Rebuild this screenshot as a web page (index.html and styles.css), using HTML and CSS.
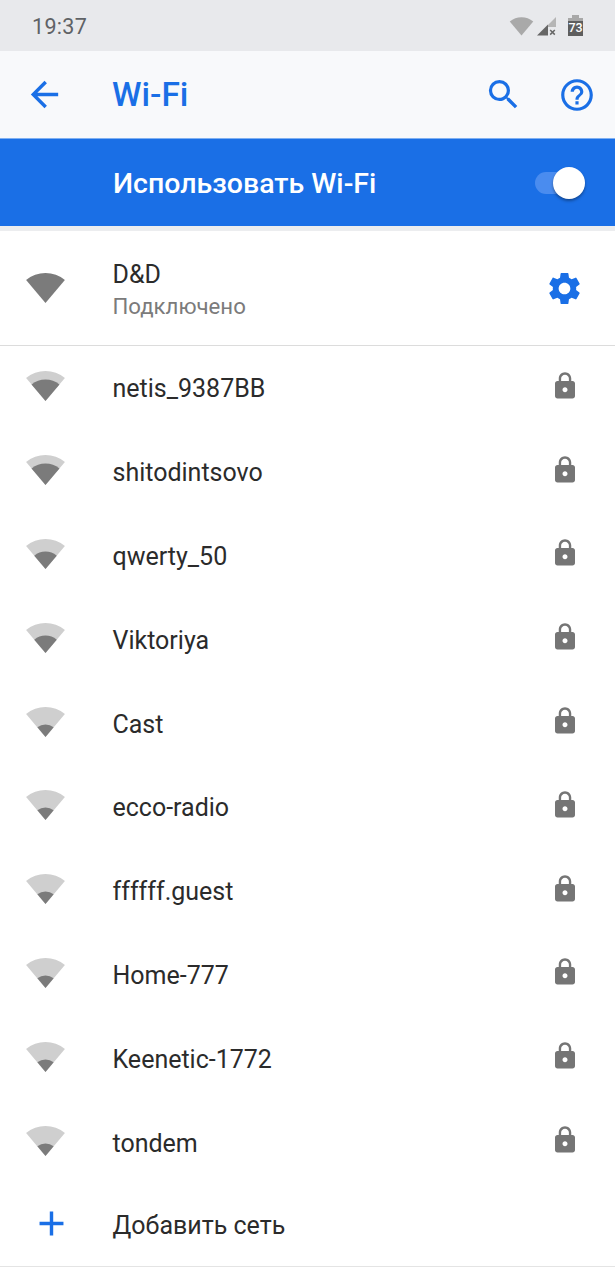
FILE: index.html
```html
<!DOCTYPE html>
<html lang="ru">
<head>
  <meta charset="UTF-8">
  <title>Wi-Fi</title>
  <link rel="stylesheet" href="styles.css">
</head>
<body>

<svg class="defs" width="0" height="0">
  <defs>
    <path id="wedge" d="M20 32 L0.6 9 A30.5 30.5 0 0 1 39.4 9 Z"/>
    <symbol id="wifi-4" viewBox="0 0 40 33">
      <use href="#wedge" fill="#7b7b7b"/>
    </symbol>
    <symbol id="wifi-3" viewBox="0 0 40 33">
      <use href="#wedge" fill="#cfcfcf"/>
      <use href="#wedge" fill="#7b7b7b" transform="translate(20 32) scale(.72) translate(-20 -32)"/>
    </symbol>
    <symbol id="wifi-2" viewBox="0 0 40 33">
      <use href="#wedge" fill="#cfcfcf"/>
      <use href="#wedge" fill="#7b7b7b" transform="translate(20 32) scale(.58) translate(-20 -32)"/>
    </symbol>
    <symbol id="wifi-1" viewBox="0 0 40 33">
      <use href="#wedge" fill="#cfcfcf"/>
      <use href="#wedge" fill="#7b7b7b" transform="translate(20 32) scale(.42) translate(-20 -32)"/>
    </symbol>
    <symbol id="lock" viewBox="0 0 24 24">
      <path d="M18 8h-1V6c0-2.76-2.24-5-5-5S7 3.24 7 6v2H6c-1.1 0-2 .9-2 2v10c0 1.1.9 2 2 2h12c1.1 0 2-.9 2-2V10c0-1.1-.9-2-2-2zm-6 9c-1.1 0-2-.9-2-2s.9-2 2-2 2 .9 2 2-.9 2-2 2zm3.1-9H8.9V6c0-1.71 1.39-3.1 3.1-3.1 1.71 0 3.1 1.39 3.1 3.1v2z"/>
    </symbol>
  </defs>
</svg>

<div class="status-bar">
  <span class="clock">19:37</span>
  <div class="status-icons">
    <svg class="st-wifi" viewBox="0 0 40 33"><use href="#wedge" fill="#a9a9a9"/></svg>
    <svg class="st-signal" viewBox="0 0 20 19">
      <path d="M11 8 L19 0 V10 H11 Z" fill="#b5b5b5"/>
      <path d="M0 18.5 L11 7.5 V18.5 Z" fill="#666"/>
      <path d="M13.2 13 L17.8 17.6 M17.8 13 L13.2 17.6" stroke="#666" stroke-width="1.5" fill="none"/>
    </svg>
    <div class="st-battery"><span>73</span></div>
  </div>
</div>

<header class="toolbar">
  <svg class="ic ic-back" viewBox="0 0 24 24"><path d="M20 11H7.83l5.59-5.59L12 4l-8 8 8 8 1.41-1.41L7.83 13H20v-2z"/></svg>
  <h1>Wi-Fi</h1>
  <svg class="ic ic-search" viewBox="0 0 24 24"><path d="M15.5 14h-.79l-.28-.27A6.471 6.471 0 0 0 16 9.5 6.5 6.5 0 1 0 9.5 16c1.61 0 3.09-.59 4.23-1.57l.27.28v.79l5 4.99L20.49 19l-4.99-5zm-6 0C7.01 14 5 11.99 5 9.5S7.01 5 9.5 5 14 7.01 14 9.5 11.99 14 9.5 14z"/></svg>
  <svg class="ic ic-help" viewBox="0 0 24 24"><path d="M11 18h2v-2h-2v2zm1-16C6.48 2 2 6.48 2 12s4.48 10 10 10 10-4.48 10-10S17.52 2 12 2zm0 18c-4.41 0-8-3.59-8-8s3.59-8 8-8 8 3.59 8 8-3.59 8-8 8zm0-14c-2.21 0-4 1.79-4 4h2c0-1.1.9-2 2-2s2 .9 2 2c0 2-3 1.75-3 5h2c0-2.25 3-2.5 3-5 0-2.21-1.79-4-4-4z"/></svg>
</header>

<div class="master-switch">
  <span class="master-label">Использовать Wi-Fi</span>
  <div class="switch"><div class="thumb"></div></div>
</div>

<main class="list">

  <!-- Connected network -->
  <div class="row row-connected">
    <svg class="wifi"><use href="#wifi-4"/></svg>
    <div class="row-text">
      <div class="name">D&amp;D</div>
      <div class="sub">Подключено</div>
    </div>
    <svg class="ic ic-gear" viewBox="0 0 24 24"><path d="M19.14 12.94c.04-.3.06-.61.06-.94 0-.32-.02-.64-.07-.94l2.03-1.58a.49.49 0 0 0 .12-.61l-1.92-3.32a.488.488 0 0 0-.59-.22l-2.39.96c-.5-.38-1.03-.7-1.62-.94l-.36-2.54a.484.484 0 0 0-.48-.41h-3.84c-.24 0-.43.17-.47.41l-.36 2.54c-.59.24-1.13.57-1.62.94l-2.39-.96c-.22-.08-.47 0-.59.22L2.74 8.87c-.12.21-.08.47.12.61l2.03 1.58c-.05.3-.09.63-.09.94s.02.64.07.94l-2.03 1.58a.49.49 0 0 0-.12.61l1.92 3.32c.12.22.37.29.59.22l2.39-.96c.5.38 1.03.7 1.62.94l.36 2.54c.05.24.24.41.48.41h3.84c.24 0 .44-.17.47-.41l.36-2.54c.59-.24 1.13-.56 1.62-.94l2.39.96c.22.08.47 0 .59-.22l1.92-3.32c.12-.22.07-.47-.12-.61l-2.01-1.58zM12 15.6c-1.98 0-3.6-1.62-3.6-3.6s1.62-3.6 3.6-3.6 3.6 1.62 3.6 3.6-1.62 3.6-3.6 3.6z"/></svg>
  </div>

  <!-- Other networks -->
  <div class="row"><svg class="wifi"><use href="#wifi-3"/></svg><div class="row-text"><div class="name">netis_9387BB</div></div><svg class="ic-lock"><use href="#lock"/></svg></div>
  <div class="row"><svg class="wifi"><use href="#wifi-3"/></svg><div class="row-text"><div class="name">shitodintsovo</div></div><svg class="ic-lock"><use href="#lock"/></svg></div>
  <div class="row"><svg class="wifi"><use href="#wifi-2"/></svg><div class="row-text"><div class="name">qwerty_50</div></div><svg class="ic-lock"><use href="#lock"/></svg></div>
  <div class="row"><svg class="wifi"><use href="#wifi-2"/></svg><div class="row-text"><div class="name">Viktoriya</div></div><svg class="ic-lock"><use href="#lock"/></svg></div>
  <div class="row"><svg class="wifi"><use href="#wifi-1"/></svg><div class="row-text"><div class="name">Cast</div></div><svg class="ic-lock"><use href="#lock"/></svg></div>
  <div class="row"><svg class="wifi"><use href="#wifi-1"/></svg><div class="row-text"><div class="name">ecco-radio</div></div><svg class="ic-lock"><use href="#lock"/></svg></div>
  <div class="row"><svg class="wifi"><use href="#wifi-1"/></svg><div class="row-text"><div class="name">ffffff.guest</div></div><svg class="ic-lock"><use href="#lock"/></svg></div>
  <div class="row"><svg class="wifi"><use href="#wifi-1"/></svg><div class="row-text"><div class="name">Home-777</div></div><svg class="ic-lock"><use href="#lock"/></svg></div>
  <div class="row"><svg class="wifi"><use href="#wifi-1"/></svg><div class="row-text"><div class="name">Keenetic-1772</div></div><svg class="ic-lock"><use href="#lock"/></svg></div>
  <div class="row"><svg class="wifi"><use href="#wifi-1"/></svg><div class="row-text"><div class="name">tondem</div></div><svg class="ic-lock"><use href="#lock"/></svg></div>

  <!-- Add network -->
  <div class="row row-add">
    <svg class="ic ic-add" viewBox="0 0 24 24"><path d="M19 13h-6v6h-2v-6H5v-2h6V5h2v6h6v2z"/></svg>
    <div class="row-text"><div class="name">Добавить сеть</div></div>
  </div>

</main>

</body>
</html>
```

FILE: styles.css
```css
* { box-sizing: border-box; margin: 0; padding: 0; }
html, body { height: 1280px; overflow: hidden; }
body { font-family: Roboto, sans-serif; background: #fff; color: #2b2b2b; }
.defs { display: block; height: 0; }

/* Status bar */
.status-bar { height: 51px; background: #e8e9ec; display: flex; align-items: center; justify-content: space-between; padding: 0 32px 0 32px; }
.clock { font-size: 21.5px; color: #5f6266; letter-spacing: .3px; padding-top: 2px; }
.status-icons { display: flex; align-items: center; }
.st-wifi { width: 25px; height: 20px; margin-right: 3px; }
.st-signal { width: 20px; height: 19px; margin-right: 11px; margin-top: 2px; }
.st-battery { width: 15px; height: 18px; margin-top: 3px; background: linear-gradient(#a8a8a8 0 3px, #5e5e5e 3px); color: #fff; font-size: 12.5px; font-weight: 500; display: flex; align-items: center; justify-content: center; position: relative; }
.st-battery::before { content: ""; position: absolute; top: -3px; left: 4px; width: 7px; height: 3px; background: #a8a8a8; }

/* Toolbar */
.toolbar { height: 88px; background: #f8f9fb; border-bottom: 1px solid #7fb0f2; display: flex; align-items: center; position: relative; }
.toolbar h1 { font-size: 33.5px; font-weight: 500; color: #1a6fe6; margin-left: 47px; flex: 1; }
.ic { fill: #1a6fe6; flex-shrink: 0; }
.ic-back { width: 41px; height: 41px; margin-left: 24px; }
.ic-search { width: 39px; height: 39px; margin-right: 35px; }
.ic-help { width: 38px; height: 38px; margin-right: 19px; }

/* Master switch */
.master-switch { height: 87px; background: #1a6fe6; display: flex; align-items: center; justify-content: space-between; padding: 0 36px 0 113px; }
.master-label { font-size: 28.5px; font-weight: 500; color: #fff; padding-top: 2px; }
.switch { width: 44px; height: 22px; border-radius: 11px; background: #4a8cef; position: relative; }
.thumb { position: absolute; right: -6px; top: -5px; width: 32px; height: 32px; border-radius: 50%; background: #fff; box-shadow: 0 2px 3px rgba(0, 0, 0, .35); }

/* List */
.list { border-top: 5px solid #ecedef; }
.row { height: 83.8px; display: flex; align-items: center; padding-left: 25px; padding-right: 35px; }
.row-connected { height: 115px; border-bottom: 1px solid #dcdcdc; padding-right: 31px; }
.row-add { border-bottom: 1px solid #e4e4e4; height: 83px; padding-left: 31px; }
.wifi { width: 41px; height: 33px; margin-bottom: 4px; flex-shrink: 0; }
.row-connected .wifi { margin-bottom: 2px; }
.row-text { flex: 1; margin-left: 46.5px; padding-top: 2px; }
.name { font-size: 25px; color: #2b2b2b; }
.sub { font-size: 22.2px; color: #7b7b7b; margin-top: 4px; }
.ic-gear { width: 39px; height: 39px; fill: #1a6fe6; }
.ic-lock { width: 30px; height: 30px; fill: #757575; margin-bottom: 4px; flex-shrink: 0; }
.ic-add { width: 41px; height: 41px; margin-bottom: 3px; }
.row-add .row-text { margin-left: 40.5px; }
```
